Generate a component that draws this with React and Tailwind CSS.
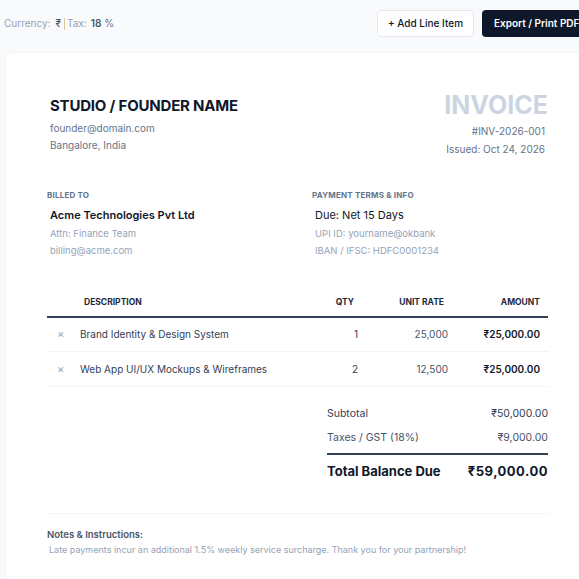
import React, { useState } from 'react';

const ITEMS = [
  { id: 1, description: 'Brand Identity & Design System', qty: 1, rate: 25000 },
  { id: 2, description: 'Web App UI/UX Mockups & Wireframes', qty: 2, rate: 12500 },
];

const TAX = 18;

const inr = (n) => '₹' + n.toLocaleString('en-IN', { minimumFractionDigits: 2, maximumFractionDigits: 2 });

export default function App() {
  const [items, setItems] = useState(ITEMS);

  const subtotal = items.reduce((s, i) => s + i.qty * i.rate, 0);
  const tax = (subtotal * TAX) / 100;
  const total = subtotal + tax;

  const addItem = () => setItems((list) => [...list, { id: Date.now(), description: 'New item', qty: 1, rate: 0 }]);
  const removeItem = (id) => setItems((list) => list.filter((i) => i.id !== id));

  return (
    <div className="min-h-screen overflow-hidden bg-[#f8fafc] font-['Inter',sans-serif] text-[#0f172a]">
      <div className="ml-[4px] w-[586px]">
        {/* toolbar */}
        <div className="flex items-center justify-between pt-[10px] mb-[15px]">
          <div className="flex items-center text-[10px] text-[#94a3b8]">
            <span>Currency:</span>
            <span className="ml-[5px] font-medium text-[#475569]">₹</span>
            <span className="ml-[3px] mr-[2px] h-[12px] w-px bg-[#e2c8a0]" />
            <span>Tax:</span>
            <span className="ml-[4px] font-semibold text-[#475569]">18</span>
            <span className="ml-[3px] text-[#64748b]">%</span>
          </div>
          <div className="flex gap-[8px]">
            <button onClick={addItem} className="h-[27px] w-[97px] rounded-[4px] border border-[#e2e8f0] bg-white text-[10px] font-medium text-[#0f172a]">
              + Add Line Item
            </button>
            <button className="h-[27px] w-[108px] rounded-[4px] bg-[#0f172a] pl-[12px] text-left text-[10px] font-semibold text-white">
              Export / Print PDF
            </button>
          </div>
        </div>

        {/* invoice sheet */}
        <div className="ml-[1px] rounded-t-[8px] border border-[#f1f5f9] bg-white px-[41px] pt-[43px] pb-[40px]">
          <div className="flex items-start justify-between">
            <div className="pl-[3px]">
              <h1 className="text-[15px] font-bold leading-[20px] tracking-[-0.2px] text-[#0f172a]">STUDIO / FOUNDER NAME</h1>
              <p className="mt-[4px] text-[10px] leading-[17px] text-[#64748b]">founder@domain.com</p>
              <p className="text-[10px] leading-[17px] text-[#64748b]">Bangalore, India</p>
            </div>
            <div className="-mt-[6px] text-right">
              <h2 className="text-[25px] font-bold leading-[30px] text-[#cbd5e1]">INVOICE</h2>
              <p className="mt-[2px] pr-[3px] text-[10px] leading-[18px] text-[#64748b]">#INV-2026-001</p>
              <p className="pr-[3px] text-[10px] leading-[18px] text-[#64748b]">Issued: Oct 24, 2026</p>
            </div>
          </div>

          <div className="mt-[31px] grid grid-cols-[265px_1fr]">
            <div>
              <p className="text-[8px] font-bold uppercase leading-[12px] tracking-[0.2px] text-[#64748b]">Billed To</p>
              <p className="mt-[6px] pl-[3px] text-[11px] font-semibold leading-[16px] text-[#0f172a]">Acme Technologies Pvt Ltd</p>
              <p className="mt-[2px] pl-[3px] text-[9.5px] leading-[17px] text-[#94a3b8]">Attn: Finance Team</p>
              <p className="pl-[3px] text-[9.5px] leading-[17px] text-[#94a3b8]">billing@acme.com</p>
            </div>
            <div>
              <p className="text-[8px] font-bold uppercase leading-[12px] tracking-[0.2px] text-[#64748b]">Payment Terms &amp; Info</p>
              <p className="mt-[6px] pl-[3px] text-[11px] leading-[16px] text-[#0f172a]">Due: Net 15 Days</p>
              <p className="mt-[2px] pl-[3px] text-[9.5px] leading-[17px] text-[#94a3b8]">UPI ID: yourname@okbank</p>
              <p className="pl-[3px] text-[9.5px] leading-[17px] text-[#94a3b8]">IBAN / IFSC: HDFC0001234</p>
            </div>
          </div>

          <table className="mt-[37px] w-full border-collapse">
            <thead>
              <tr className="border-b-2 border-[#334155] text-[8.5px] font-bold uppercase text-[#1e293b]">
                <th className="w-[33px] pb-[7px]" />
                <th className="pb-[7px] pl-[4px] text-left font-bold">Description</th>
                <th className="w-[60px] pb-[7px] pr-[8px] text-right font-bold">Qty</th>
                <th className="w-[90px] pb-[7px] pr-[8px] text-right font-bold">Unit Rate</th>
                <th className="w-[96px] pb-[7px] pr-[8px] text-right font-bold">Amount</th>
              </tr>
            </thead>
            <tbody>
              {items.map((item) => (
                <tr key={item.id} className="h-[35px] border-b border-[#f1f5f9] text-[10px]">
                  <td className="pl-[10px]">
                    <button onClick={() => removeItem(item.id)} className="text-[11px] text-[#94a3b8]">×</button>
                  </td>
                  <td className="text-[#334155]">{item.description}</td>
                  <td className="pr-[4px] text-right text-[#334155]">{item.qty}</td>
                  <td className="pr-[4px] text-right text-[#475569]">{item.rate.toLocaleString('en-IN')}</td>
                  <td className="pr-[8px] text-right font-semibold text-[#0f172a]">{inr(item.qty * item.rate)}</td>
                </tr>
              ))}
            </tbody>
          </table>

          <div className="mt-[15px] flex justify-end">
            <div className="w-[221px]">
              <div className="flex justify-between text-[10.5px] leading-[24px] text-[#334155]">
                <span>Subtotal</span>
                <span>{inr(subtotal)}</span>
              </div>
              <div className="flex justify-between text-[10.5px] leading-[24px] text-[#475569]">
                <span>Taxes / GST ({TAX}%)</span>
                <span>{inr(tax)}</span>
              </div>
              <div className="mt-[3px] flex justify-between border-t-2 border-[#334155] pt-[4px] text-[13px] font-bold leading-[24px] text-[#0f172a]">
                <span>Total Balance Due</span>
                <span className="tracking-[0.5px]">{inr(total)}</span>
              </div>
            </div>
          </div>

          <div className="mt-[30px] border-t border-[#f1f5f9] pt-[14px]">
            <p className="text-[9.5px] font-semibold leading-[14px] text-[#475569]">Notes &amp; Instructions:</p>
            <p className="mt-[1px] pl-[2px] text-[9px] leading-[14px] text-[#94a3b8]">
              Late payments incur an additional 1.5% weekly service surcharge. Thank you for your partnership!
            </p>
          </div>
        </div>
      </div>
    </div>
  );
}
